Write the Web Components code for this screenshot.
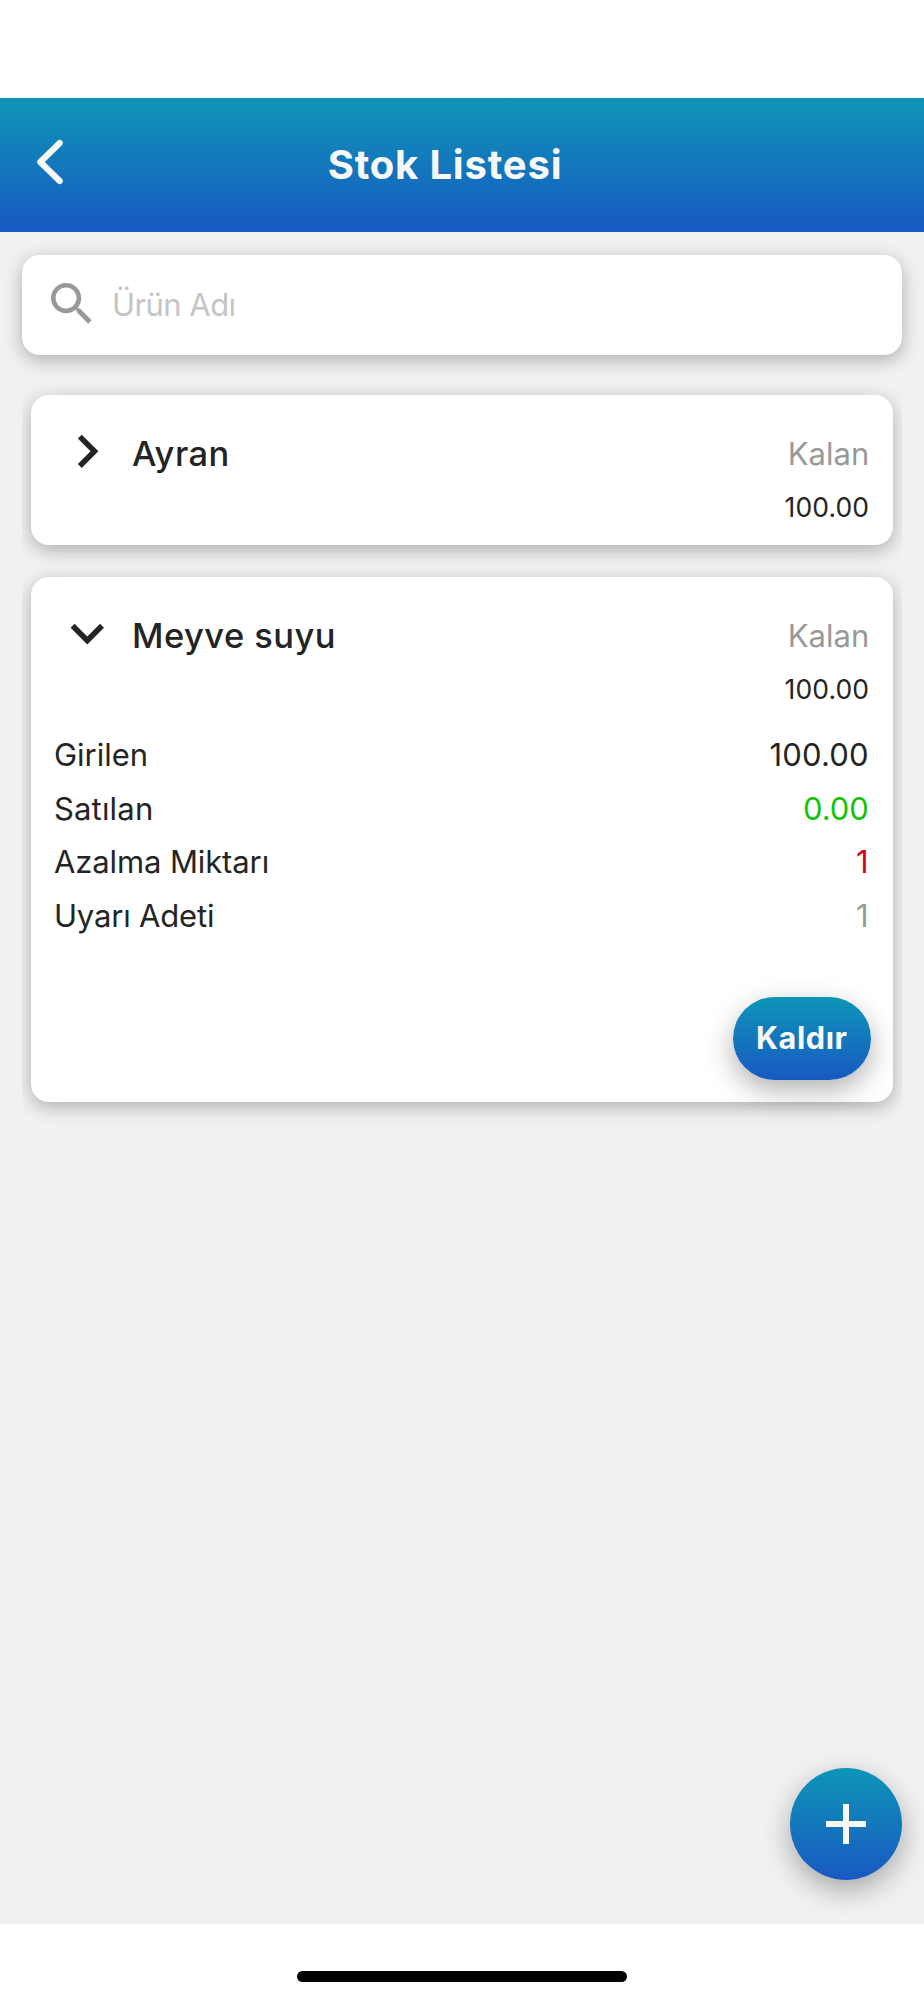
<!DOCTYPE html>
<html lang="tr">
<head>
<meta charset="utf-8">
<title>Stok Listesi</title>
<style>
html, body { margin: 0; background: #fff; }
body { font-family: Inter, "Liberation Sans", sans-serif; color: #242424; }
</style>
</head>
<body>
<stock-screen>
  <app-header slot="header">Stok Listesi</app-header>
  <search-field placeholder="Ürün Adı"></search-field>
  <stock-list>
    <stock-card name="Ayran" remaining="100.00"></stock-card>
    <stock-card name="Meyve suyu" remaining="100.00" open>
      <detail-row label="Girilen" style="--ls:0px;--vls:.15px">100.00</detail-row>
      <detail-row label="Satılan" style="--ls:.2px;--value:#14c404;--vls:-.1px">0.00</detail-row>
      <detail-row label="Azalma Miktarı" style="--ls:-.1px;--value:#d0021b">1</detail-row>
      <detail-row label="Uyarı Adeti" style="--ls:-.16px;--value:#999">1</detail-row>
      <pill-button slot="action">Kaldır</pill-button>
    </stock-card>
  </stock-list>
  <add-button slot="fab"></add-button>
</stock-screen>

<script>
const define = (name, html) => customElements.define(name, class extends HTMLElement {
  constructor() {
    super();
    this.attachShadow({ mode: 'open' });
  }
  connectedCallback() {
    const t = document.createElement('template');
    t.innerHTML = typeof html === 'function' ? html(this) : html;
    this.shadowRoot.replaceChildren(t.content.cloneNode(true));
  }
});

define('app-header', `
  <style>
    :host { display: grid; grid-template-columns: 36px 1fr 36px; align-items: center; box-sizing: border-box;
      height: 134px; padding: 0 34px; background: linear-gradient(#0e95b7, #1859c1); color: #f8f8f8; }
    svg { display: block; width: 36px; height: 50px; margin-top: -6.6px; }
    h1 { margin: 0 34px 0 0; font-size: 40px; line-height: 48px; font-weight: 700; letter-spacing: .82px; text-align: center; }
  </style>
  <svg viewBox="0 0 36 50" fill="none" stroke="#f8f8f8" stroke-width="6.2" stroke-linecap="round" stroke-linejoin="round"><path d="M25.7 6L6.3 25 25.7 44"/></svg>
  <h1><slot></slot></h1>`);

define('search-field', el => `
  <style>
    :host { display: flex; align-items: center; box-sizing: border-box; height: 100.4px; margin: 22.4px 22.5px 0 22.4px;
      padding-left: 22px; border-radius: 17.9px; background: #fff; box-shadow: 0 5px 18px rgba(0,0,0,.28); }
    svg { width: 55.8px; height: 55.8px; fill: #999; margin-top: -.8px; }
    span { margin-left: 11.7px; font-size: 31px; line-height: 40px; letter-spacing: -.54px; color: #c4c4c6; }
  </style>
  <svg viewBox="0 0 24 24"><path d="M15.5 14h-.79l-.28-.27A6.471 6.471 0 0 0 16 9.5 6.5 6.5 0 1 0 9.5 16c1.61 0 3.09-.59 4.23-1.57l.27.28v.79l5 4.99L20.49 19l-4.99-5zm-6 0C7.01 14 5 11.99 5 9.5S7.01 5 9.5 5 14 7.01 14 9.5 11.99 14 9.5 14z"/></svg>
  <span>${el.getAttribute('placeholder')}</span>`);

define('stock-list', `
  <style>
    :host { display: flex; flex-direction: column; gap: 31.5px; box-sizing: border-box; margin: 17.9px 22.3px 0;
      padding: 22.1px 8.9px; height: 1400px; overflow: hidden; }
  </style>
  <slot></slot>`);

define('stock-card', el => {
  const open = el.hasAttribute('open');
  return `
  <style>
    :host { display: flex; flex-direction: column; box-sizing: border-box; height: ${open ? 525.3 : 150.2}px;
      padding: 32.4px 24.2px 21.9px 22.7px; border-radius: 17.9px; background: #fff; box-shadow: 0 5px 18px rgba(0,0,0,.28); flex: none; }
    header { display: flex; align-items: flex-start; }
    svg { width: 66.6px; height: 66.6px; margin-top: -9.2px; fill: #242424; }
    h2 { flex: 1; margin: 0 0 0 11.6px; font-size: 34.5px; line-height: 53px; font-weight: 500; letter-spacing: .44px; }
    .left { display: grid; text-align: right; line-height: 53.8px; margin-right: -.6px; }
    .left span { font-size: 31px; color: #999; }
    .left b { font-size: 26.5px; font-weight: 400; letter-spacing: .12px; }
    .rows { display: grid; margin: 11.5px 0 0 0; }
    .action { display: flex; justify-content: flex-end; margin-top: auto; }
  </style>
  <header>
    <svg viewBox="0 0 24 24"><path d="${open
      ? 'M7.41 8.59L12 13.17l4.59-4.58L18 10l-6 6-6-6 1.41-1.41z'
      : 'M8.59 16.59L13.17 12 8.59 7.41 10 6l6 6-6 6-1.41-1.41z'}"/></svg>
    <h2>${el.getAttribute('name')}</h2>
    <div class="left"><span>Kalan</span><b>${el.getAttribute('remaining')}</b></div>
  </header>
  ${open ? '<div class="rows"><slot></slot></div><div class="action"><slot name="action"></slot></div>' : ''}`;
});

define('detail-row', el => `
  <style>
    :host { display: flex; justify-content: space-between; font-size: 31px; line-height: 53.6px; }
    span { letter-spacing: var(--ls, 0); }
    b { font-weight: 400; color: var(--value, #242424); letter-spacing: var(--vls, 0); }
  </style>
  <span>${el.getAttribute('label')}</span><b><slot></slot></b>`);

define('pill-button', `
  <style>
    :host { display: block; width: 137.4px; height: 83px; margin-right: -1.9px; border-radius: 41.5px; text-align: center;
      background: linear-gradient(#0e95b7, #1859c1); color: #f8f8f8; font-size: 30.6px; font-weight: 700;
      line-height: 82px; letter-spacing: .6px; box-shadow: 0 10px 28px rgba(0,0,0,.31); }
  </style>
  <slot></slot>`);

define('add-button', `
  <style>
    :host { display: grid; place-items: center; width: 112px; height: 112px; border-radius: 50%;
      background: linear-gradient(#0e95b7, #1859c1); box-shadow: 0 10px 28px rgba(0,0,0,.31); }
    svg { width: 40px; height: 40px; }
  </style>
  <svg viewBox="0 0 40 40" fill="#f8f8f8"><path d="M17 0h6v17h17v6H23v17h-6V23H0v-6h17z"/></svg>`);

define('stock-screen', `
  <style>
    :host { display: flex; flex-direction: column; box-sizing: border-box; width: 924px; height: 2000px; padding-top: 98.2px; overflow: hidden; }
    main { position: relative; flex: 1; background: #f1f1f1; overflow: hidden; display: flow-root; }
    .fab { position: absolute; right: 22.3px; bottom: 44.4px; }
    footer { display: flex; justify-content: center; height: 76px; }
    footer i { width: 330px; height: 11.4px; margin-top: 46.8px; border-radius: 6px; background: #000; }
  </style>
  <slot name="header"></slot>
  <main><slot></slot><div class="fab"><slot name="fab"></slot></div></main>
  <footer><i></i></footer>`);
</script>
</body>
</html>
